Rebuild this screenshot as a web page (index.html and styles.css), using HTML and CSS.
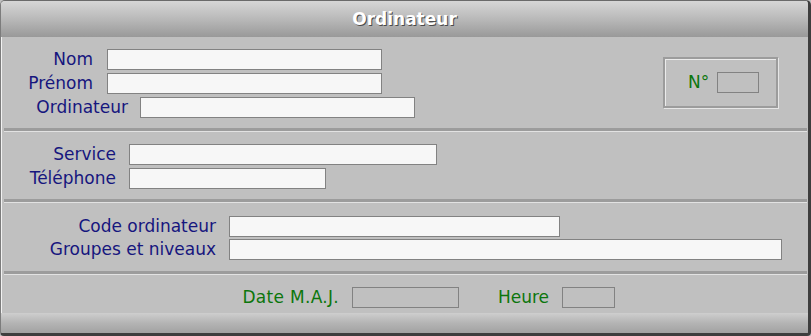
FILE: index.html
```html
<!DOCTYPE html>
<html lang="fr">
<head>
<meta charset="utf-8">
<title>Ordinateur</title>
<link rel="stylesheet" href="styles.css">
</head>
<body>
<div class="window">
  <div class="titlebar"><span class="title">Ordinateur</span></div>

  <div class="section s1">
    <div class="fields">
      <div class="row"><span class="lbl l-nom">Nom</span><span class="field w275"></span></div>
      <div class="row"><span class="lbl l-nom">Prénom</span><span class="field w275"></span></div>
      <div class="row"><span class="lbl l-ord">Ordinateur</span><span class="field w275"></span></div>
    </div>
    <div class="numbox">
      <span class="lbl green">N°</span><span class="field ro w42"></span>
    </div>
  </div>
  <div class="sep"></div>

  <div class="section s2">
    <div class="row"><span class="lbl l-svc">Service</span><span class="field w308"></span></div>
    <div class="row"><span class="lbl l-svc">Téléphone</span><span class="field w197"></span></div>
  </div>
  <div class="sep"></div>

  <div class="section s3">
    <div class="row"><span class="lbl l-code">Code ordinateur</span><span class="field w331"></span></div>
    <div class="row"><span class="lbl l-code">Groupes et niveaux</span><span class="field w553"></span></div>
  </div>
  <div class="sep"></div>

  <div class="section s4">
    <div class="row">
      <span class="lbl green l-date">Date M.A.J.</span><span class="field ro w107"></span>
      <span class="lbl green l-heure">Heure</span><span class="field ro w53"></span>
    </div>
  </div>

  <div class="footer"></div>
</div>
</body>
</html>
```

FILE: styles.css
```css
* {
  box-sizing: border-box;
  margin: 0;
  padding: 0;
}

html, body {
  width: 811px;
  height: 336px;
  overflow: hidden;
  background: #c0c0c0;
}

body {
  font-family: "DejaVu Sans", Verdana, sans-serif;
  font-size: 17px;
}

.window {
  width: 811px;
  height: 336px;
  display: flex;
  flex-direction: column;
  background: #c0c0c0;
  border-top: 1px solid #6a6a6a;
  border-left: 1px solid #7c7c7c;
  border-right: 3px solid #3e3e3e;
  border-bottom: 3px solid #3e3e3e;
  border-radius: 5px 5px 4px 4px;
  overflow: hidden;
  box-shadow: inset 1px 0 0 #f2f2f2;
}

.titlebar {
  height: 36px;
  flex: none;
  display: flex;
  align-items: center;
  justify-content: center;
  background: linear-gradient(#d6d6d6, #b9b9b9 50%, #999999);
}

.title {
  font-weight: bold;
  font-size: 17px;
  color: #ffffff;
  text-shadow: 1px 1px 0 #4a4a4a;
}

.section {
  flex: none;
}

.s1 {
  height: 91px;
  display: flex;
  align-items: flex-start;
}

.s1 .fields {
  padding-top: 12px;
}

.s2 {
  height: 67px;
  padding-top: 12px;
}

.s3 {
  height: 68px;
  padding-top: 13px;
}

.s4 {
  height: 38px;
  padding-top: 12px;
}

.row {
  display: flex;
  align-items: center;
  height: 21px;
}

.row + .row {
  margin-top: 3px;
}

.s3 .row + .row {
  margin-top: 2px;
}

.lbl {
  flex: none;
  text-align: right;
  color: #16167e;
  white-space: nowrap;
  line-height: 1;
}

.lbl.green {
  color: #0c760c;
}

.l-nom { width: 106px; padding-right: 14px; }
.l-ord { width: 139px; padding-right: 12px; }
.l-svc { width: 128px; padding-right: 13px; }
.l-code { width: 228px; padding-right: 13px; }
.l-date { width: 351px; padding-right: 13px; letter-spacing: 0.3px; }
.l-heure { width: 103px; padding-right: 13px; }

.field {
  flex: none;
  display: block;
  height: 21px;
  background: #f7f7f7;
  border: 1px solid #828282;
}

.field.ro {
  background: #c0c0c0;
}

.w275 { width: 275px; }
.w308 { width: 308px; }
.w197 { width: 197px; }
.w331 { width: 331px; }
.w553 { width: 553px; }
.w107 { width: 107px; }
.w53 { width: 53px; }
.w42 { width: 42px; }

.numbox {
  flex: none;
  margin: 20px 30px 0 auto;
  width: 115px;
  height: 51px;
  display: flex;
  align-items: center;
  padding-left: 23px;
  gap: 8px;
  border: 2px solid #9c9c9c;
  box-shadow: inset 1px 1px 0 #ebebeb, 1px 1px 0 #e6e6e6;
}

.sep {
  flex: none;
  height: 4px;
  margin: 0 1px 0 3px;
  border-top: 3px solid #9c9c9c;
  border-bottom: 1px solid #e2e2e2;
}

.footer {
  flex: none;
  height: 20px;
  background: linear-gradient(#cecece, #b4b4b4 50%, #a2a2a2);
}
```
